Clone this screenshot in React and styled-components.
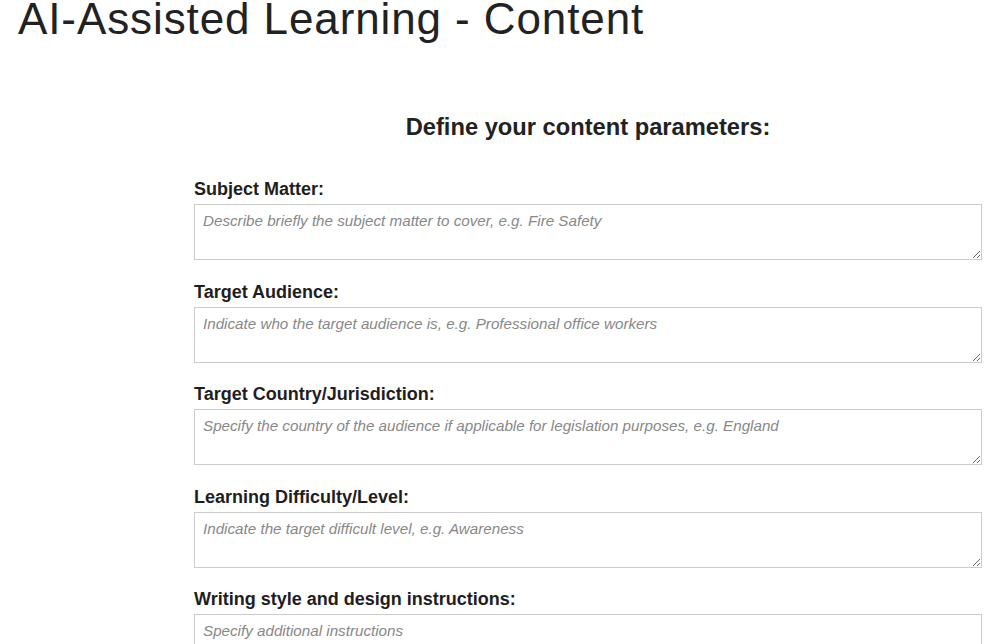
import React from 'react'
import { styled, createGlobalStyle } from 'styled-components'

const GlobalStyle = createGlobalStyle`
  html, body {
    margin: 0;
    padding: 0;
    background: #fff;
    font-family: "Liberation Sans", Arial, sans-serif;
    color: #222;
  }
`

const fields = [
  { label: 'Subject Matter:', hint: 'Describe briefly the subject matter to cover, e.g. Fire Safety' },
  { label: 'Target Audience:', hint: 'Indicate who the target audience is, e.g. Professional office workers' },
  { label: 'Target Country/Jurisdiction:', hint: 'Specify the country of the audience if applicable for legislation purposes, e.g. England' },
  { label: 'Learning Difficulty/Level:', hint: 'Indicate the target difficult level, e.g. Awareness' },
  { label: 'Writing style and design instructions:', hint: 'Specify additional instructions' },
]

const App = () => {
  return (
    <Page>
      <GlobalStyle />
      <Title>AI-Assisted Learning - Content</Title>
      <Form>
        <Heading>Define your content parameters:</Heading>
        {fields.map((f) => (
          <Field key={f.label}>
            <Label>{f.label}</Label>
            <Area placeholder={f.hint} />
          </Field>
        ))}
      </Form>
    </Page>
  )
}

export default App

const Page = styled.div`
  padding: 0 12px 40px 18px;
`

const Title = styled.h1`
  margin: 0;
  font-size: 44px;
  font-weight: 400;
  letter-spacing: 0.9px;
  line-height: 37.5px;
  color: #222;
`

const Form = styled.form`
  width: 788px;
  margin-left: 176px;
  display: flex;
  flex-direction: column;
`

const Heading = styled.h2`
  margin: 75.5px 0 38px;
  text-align: center;
  font-size: 23.7px;
  font-weight: 700;
  line-height: 28px;
`

const Field = styled.div`
  display: flex;
  flex-direction: column;
  gap: 5px;
  margin-bottom: 21.5px;
`

const Label = styled.label`
  font-size: 18px;
  font-weight: 700;
  line-height: 20px;
  color: #1e1e1e;
`

const Area = styled.textarea`
  box-sizing: border-box;
  width: 100%;
  height: 56px;
  padding: 7px 8px;
  border: 1px solid #ccc;
  border-radius: 0;
  font-family: "Liberation Sans", Arial, sans-serif;
  font-size: 15.2px;
  color: #222;
  &::placeholder {
    color: #888;
    font-style: italic;
  }
`
